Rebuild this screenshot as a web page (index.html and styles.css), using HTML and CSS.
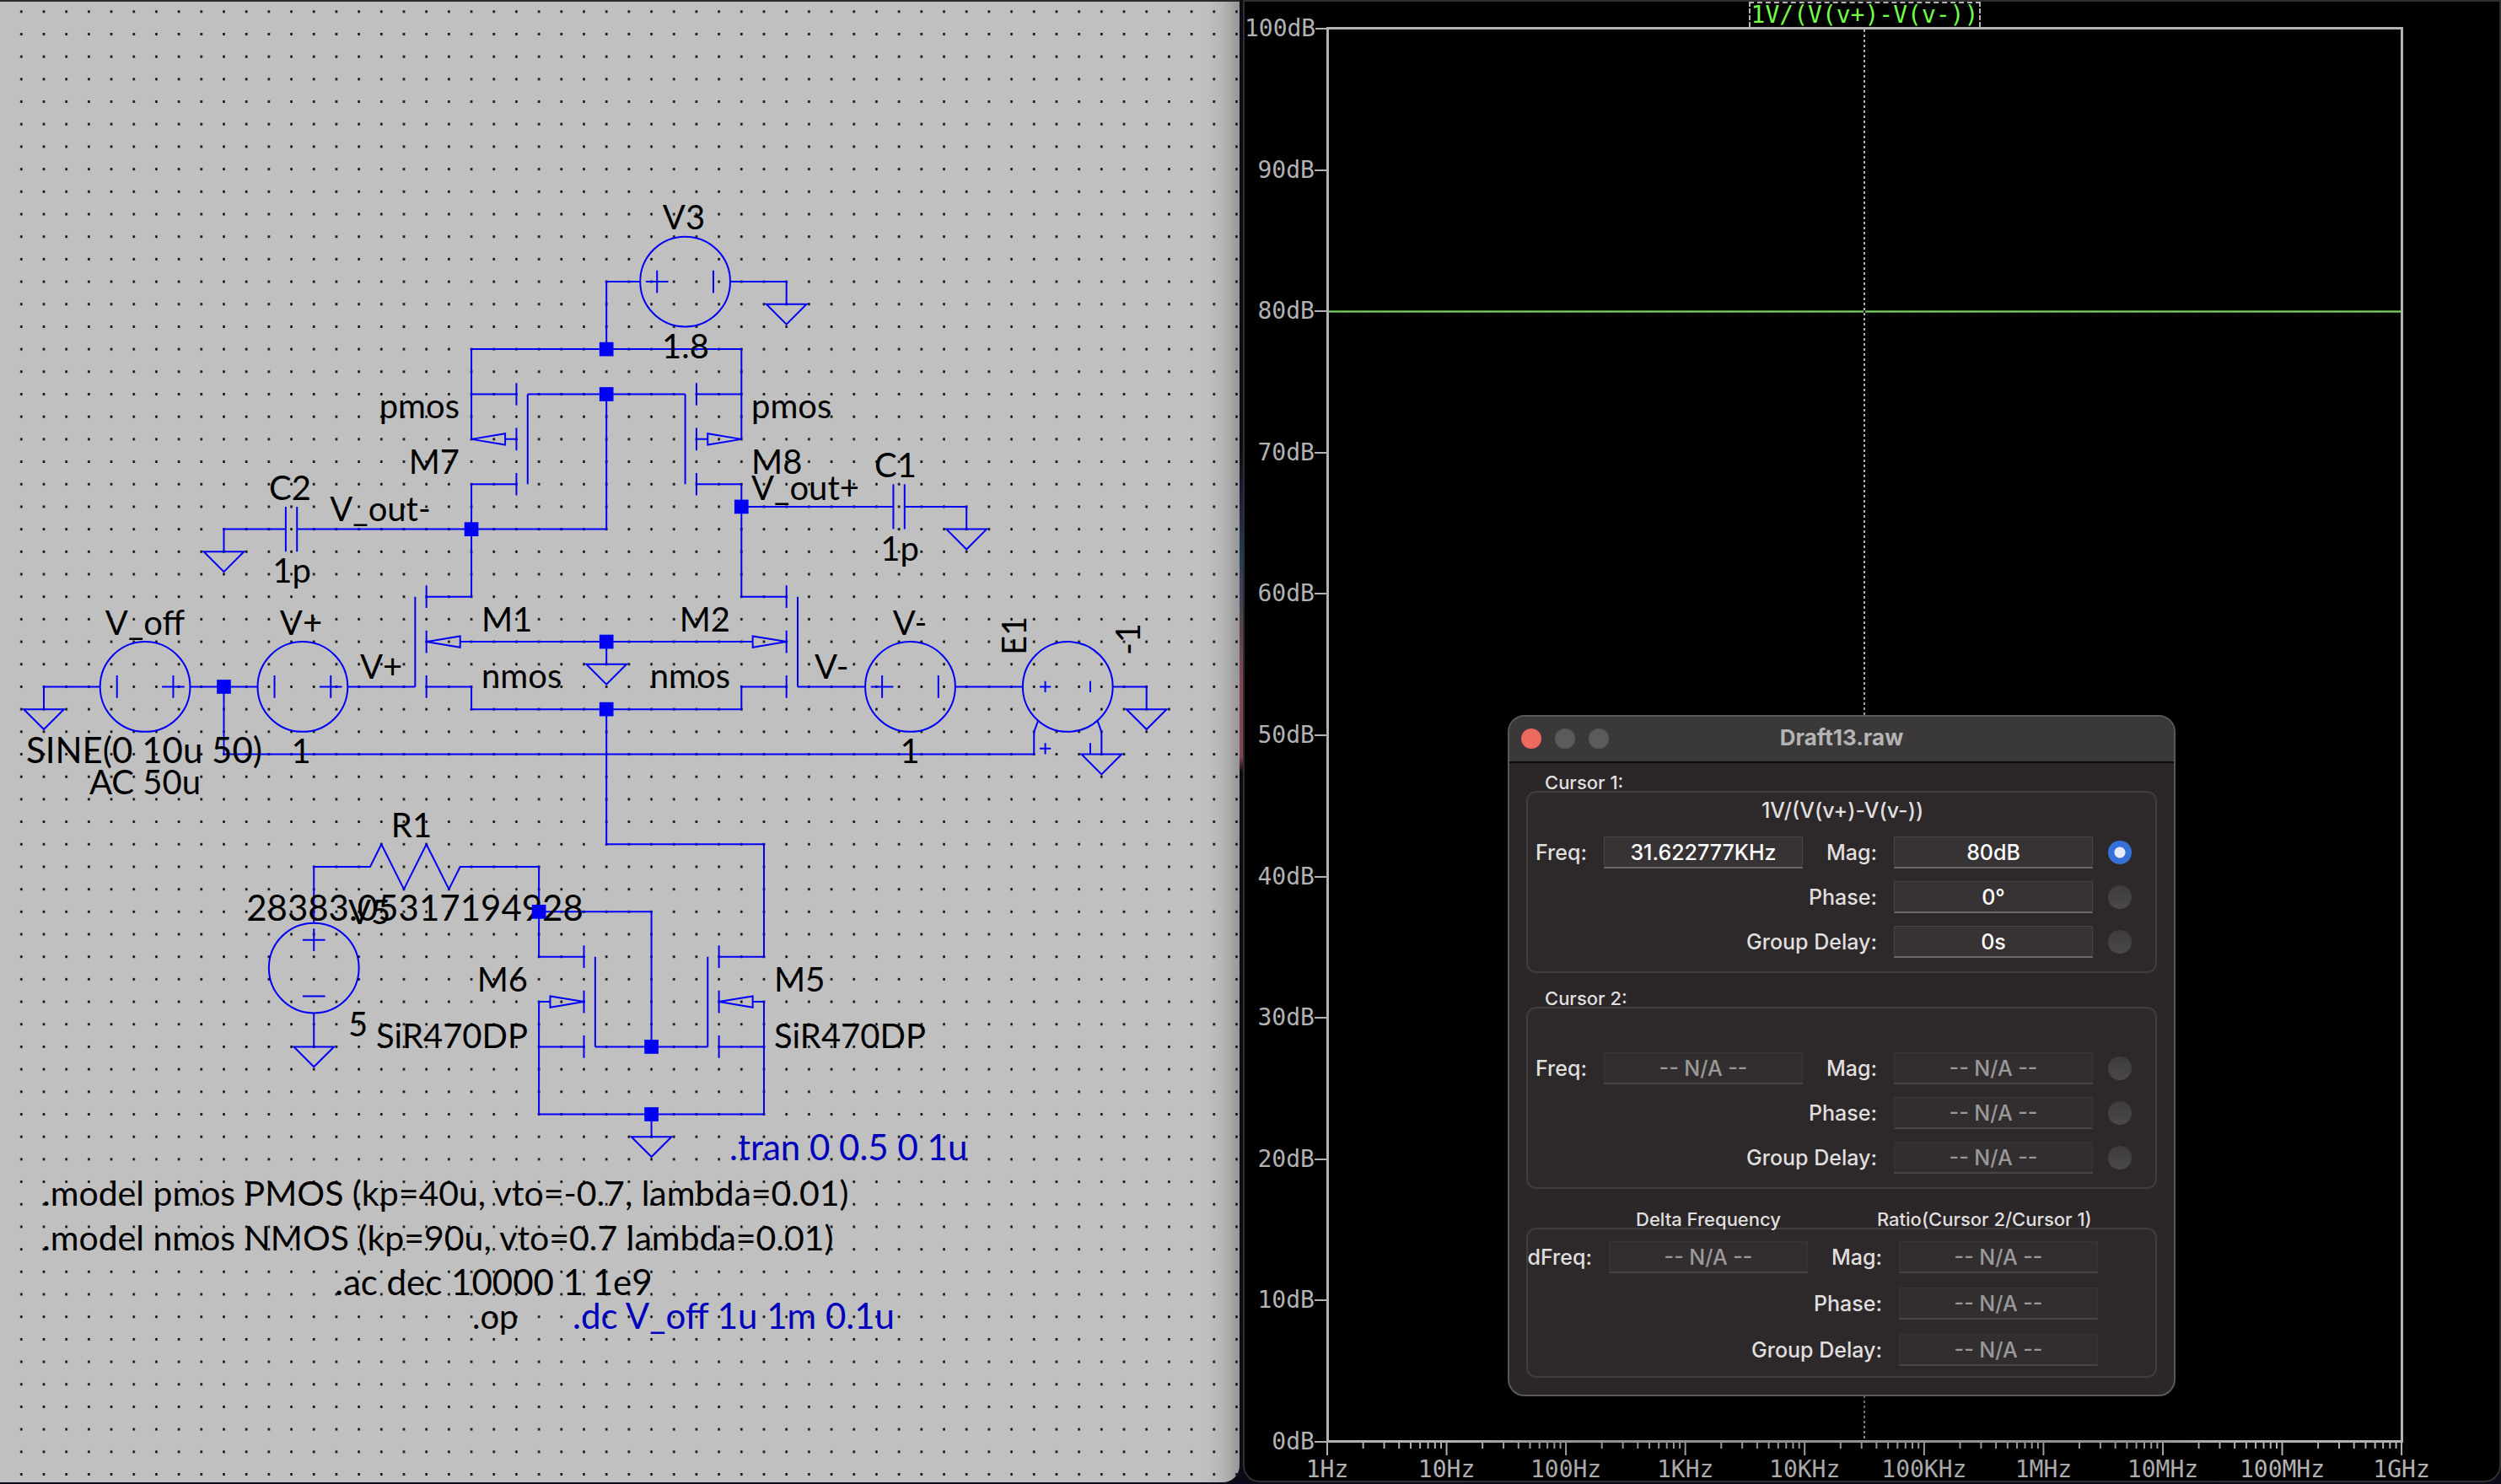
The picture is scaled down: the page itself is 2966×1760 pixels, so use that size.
FILE: index.html
```html
<!DOCTYPE html>
<html lang="en">
<head>
<meta charset="utf-8">
<title>Draft13</title>
<link rel="stylesheet" href="styles.css">
</head>
<body>
<main class="desktop">
  <section class="schematic" aria-label="Schematic">
    <svg class="sheet" xmlns="http://www.w3.org/2000/svg">
      <defs>
        <pattern id="dots" width="16" height="16" patternUnits="userSpaceOnUse" x="-8" y="-8">
          <rect x="7.3" y="7.1" width="1.4" height="1.8"/>
        </pattern>
        <path id="gnd" d="M-14.3 0H14.3L0 14.3Z"/>
        <rect id="node" x="-5" y="-5" width="10" height="10"/>
        <g id="source-right"><circle r="32"/><path d="M20 -8V8M12 0H28M-20 -8V8"/></g>
        <g id="source-left"><circle r="32"/><path d="M-20 -8V8M-28 0H-12M20 -8V8"/></g>
        <path id="fet" d="M0 0V64M8 -8V8M8 24V40M8 56V72M8 0H24M8 64H24"/>
      </defs>
      <g transform="translate(25.3 13.8) scale(1.668)">
        <rect x="-8" y="-8" width="100%" height="100%" fill="url(#dots)"/>
        <g class="wires">
          <!-- supply and current mirror load -->
          <path d="M416 240V192H440M504 192H544V208M320 304V240H512V304M416 272V368H196M360 272H472"/>
          <path d="M320 272H336M320 336H336M512 272H496M512 336H496M320 336V416H304M512 336V416H528"/>
          <path d="M188 368H144V384M512 352H620M628 352H672V368"/>
          <path d="M188 352V384M196 352V384M620 336V368M628 336V368"/>
          <!-- differential pair -->
          <path d="M16 496V480H56M120 480H168M232 480H280M304 480H320V496H512V480H528M416 448V464M312 448H520"/>
          <path d="M552 480H600M664 480H712M776 480H800V496"/>
          <path d="M144 480V528H720V512L723 504M765 504L768 512V528"/>
          <!-- tail and bias -->
          <path d="M416 496V592H528V672H512M208 648V608H248L256 592L272 624L288 592L304 624L312 608H368V672H384M368 640H448V736M408 736H488M208 712V736"/>
          <path d="M376 704H368V784H528V704H520M368 736H384M528 736H512M448 784V800"/>
          <!-- bodies -->
          <path d="M320 304L344 300V308ZM344 304H352M512 304L488 300V308ZM488 304H480M288 448L312 444V452ZM544 448L520 444V452ZM400 704L376 700V708ZM496 704L520 700V708Z"/>
          <use href="#fet" transform="translate(360 272) scale(-1 1)"/>
          <use href="#fet" x="472" y="272"/>
          <use href="#fet" x="280" y="416"/>
          <use href="#fet" transform="translate(552 416) scale(-1 1)"/>
          <use href="#fet" transform="translate(408 672) scale(-1 1)"/>
          <use href="#fet" x="488" y="672"/>
          <use href="#source-left" x="472" y="192"/>
          <use href="#source-right" x="88" y="480"/>
          <use href="#source-right" x="200" y="480"/>
          <use href="#source-left" x="632" y="480"/>
          <circle cx="744" cy="480" r="32"/>
          <path d="M728 476V484M724 480H732M760 476V484M728 520V528M724 524H732M760 520V528"/>
          <circle cx="208" cy="680" r="32"/>
          <path d="M208 652V668M200 660H216M200 700H216"/>
          <use href="#gnd" x="544" y="208"/><use href="#gnd" x="144" y="384"/>
          <use href="#gnd" x="672" y="368"/><use href="#gnd" x="16" y="496"/>
          <use href="#gnd" x="416" y="464"/><use href="#gnd" x="800" y="496"/>
          <use href="#gnd" x="768" y="528"/><use href="#gnd" x="208" y="736"/>
          <use href="#gnd" x="448" y="800"/>
        </g>
      </g>
      <g class="labels" transform="translate(0 1)">
        <text x="811" y="271" class="mid">V3</text>
        <text x="813" y="424" class="mid">1.8</text>
        <text x="545" y="495" class="end">pmos</text>
        <text x="545" y="561" class="end">M7</text>
        <text x="891" y="495">pmos</text>
        <text x="891" y="561">M8</text>
        <text x="891" y="592">V_out+</text>
        <text x="1062" y="565" class="mid">C1</text>
        <text x="1067" y="664" class="mid">1p</text>
        <text x="344" y="592" class="mid">C2</text>
        <text x="451" y="617" class="mid">V_out-</text>
        <text x="346" y="690" class="mid">1p</text>
        <text x="172" y="752" class="mid">V_off</text>
        <text x="357" y="752" class="mid">V+</text>
        <text x="427" y="804">V+</text>
        <text x="571" y="748">M1</text>
        <text x="571" y="815">nmos</text>
        <text x="866" y="748" class="end">M2</text>
        <text x="866" y="815" class="end">nmos</text>
        <text x="966" y="804">V-</text>
        <text x="1079" y="752" class="mid">V-</text>
        <text x="1079" y="904" class="mid">1</text>
        <text transform="translate(1217 776) rotate(-90)">E1</text>
        <text transform="translate(1352 776) rotate(-90)">-1</text>
        <text x="171" y="904" class="mid value">SINE(0 10u 50)</text>
        <text x="172" y="941" class="mid">AC 50u</text>
        <text x="357" y="904" class="mid">1</text>
        <text x="488" y="992" class="mid">R1</text>
        <text x="492" y="1091" class="mid value">28383.05317194928</text>
        <text x="413" y="1095">V5</text>
        <text x="413" y="1228">5</text>
        <text x="626" y="1175" class="end">M6</text>
        <text x="626" y="1242" class="end">SiR470DP</text>
        <text x="918" y="1175">M5</text>
        <text x="918" y="1242">SiR470DP</text>
        <text x="50" y="1429" class="model">.model pmos PMOS (kp=40u, vto=-0.7, lambda=0.01)</text>
        <text x="50" y="1482" class="model">.model nmos NMOS (kp=90u, vto=0.7 lambda=0.01)</text>
        <text x="397" y="1535" class="value">.ac dec 10000 1 1e9</text>
        <text x="560" y="1575">.op</text>
        <text x="865" y="1375" class="value comment">.tran 0 0.5 0 1u</text>
        <text x="679" y="1575" class="value comment">.dc V_off 1u 1m 0.1u</text>
      </g>
      <g class="nodes" transform="translate(25.3 13.8) scale(1.668)">
        <use href="#node" x="416" y="240"/><use href="#node" x="416" y="272"/>
        <use href="#node" x="320" y="368"/><use href="#node" x="512" y="352"/>
        <use href="#node" x="416" y="448"/><use href="#node" x="416" y="496"/>
        <use href="#node" x="144" y="480"/><use href="#node" x="368" y="640"/>
        <use href="#node" x="448" y="736"/><use href="#node" x="448" y="784"/>
      </g>
    </svg>
  </section>

  <section class="waveform" aria-label="Waveform">
    <div class="trace-name">1V/(V(v+)-V(v-))</div>
    <ul class="mag-axis">
      <li>100dB</li><li>90dB</li><li>80dB</li><li>70dB</li><li>60dB</li><li>50dB</li>
      <li>40dB</li><li>30dB</li><li>20dB</li><li>10dB</li><li>0dB</li>
    </ul>
    <div class="plot">
      <div class="trace"></div>
      <div class="cursor"></div>
    </div>
    <svg class="freq-axis" xmlns="http://www.w3.org/2000/svg">
      <defs>
        <symbol id="decade" overflow="visible">
          <path d="M0 0V15"/>
          <line x1="30.1%" x2="30.1%" y2="7"/><line x1="47.7%" x2="47.7%" y2="7"/>
          <line x1="60.2%" x2="60.2%" y2="7"/><line x1="69.9%" x2="69.9%" y2="7"/>
          <line x1="77.8%" x2="77.8%" y2="7"/><line x1="84.5%" x2="84.5%" y2="7"/>
          <line x1="90.3%" x2="90.3%" y2="7"/><line x1="95.4%" x2="95.4%" y2="7"/>
        </symbol>
      </defs>
      <g class="ticks">
        <use href="#decade" x="0%" width="11.11%" height="15"/>
        <use href="#decade" x="11.11%" width="11.11%" height="15"/>
        <use href="#decade" x="22.22%" width="11.11%" height="15"/>
        <use href="#decade" x="33.33%" width="11.11%" height="15"/>
        <use href="#decade" x="44.44%" width="11.11%" height="15"/>
        <use href="#decade" x="55.56%" width="11.11%" height="15"/>
        <use href="#decade" x="66.67%" width="11.11%" height="15"/>
        <use href="#decade" x="77.78%" width="11.11%" height="15"/>
        <use href="#decade" x="88.89%" width="11.11%" height="15"/>
        <line x1="100%" x2="100%" y2="15"/>
      </g>
      <text x="0%" y="41">1Hz</text>
      <text x="11.11%" y="41">10Hz</text>
      <text x="22.22%" y="41">100Hz</text>
      <text x="33.33%" y="41">1KHz</text>
      <text x="44.44%" y="41">10KHz</text>
      <text x="55.56%" y="41">100KHz</text>
      <text x="66.67%" y="41">1MHz</text>
      <text x="77.78%" y="41">10MHz</text>
      <text x="88.89%" y="41">100MHz</text>
      <text x="100%" y="41">1GHz</text>
    </svg>
  </section>

  <form class="dialog" aria-label="Draft13.raw">
    <header class="titlebar">
      <button type="button" class="light close" aria-label="Close"></button>
      <button type="button" class="light" aria-label="Minimize"></button>
      <button type="button" class="light" aria-label="Zoom"></button>
      <h1>Draft13.raw</h1>
    </header>
    <div class="content">
      <section class="group">
        <h2>Cursor 1:</h2>
        <div class="box">
          <p class="formula">1V/(V(v+)-V(v-))</p>
          <label for="f1">Freq:</label><input type="text" id="f1" value="31.622777KHz" readonly>
          <label for="m1">Mag:</label><input type="text" id="m1" value="80dB" readonly>
          <input type="radio" name="slope" aria-label="Cursor 1 magnitude" checked>
          <label for="p1" class="wide">Phase:</label><input type="text" id="p1" value="0°" readonly>
          <input type="radio" name="slope" aria-label="Cursor 1 phase">
          <label for="g1" class="wide">Group Delay:</label><input type="text" id="g1" value="0s" readonly>
          <input type="radio" name="slope" aria-label="Cursor 1 group delay">
        </div>
      </section>
      <section class="group">
        <h2>Cursor 2:</h2>
        <div class="box">
          <p class="formula"></p>
          <label for="f2">Freq:</label><input type="text" id="f2" value="-- N/A --" disabled>
          <label for="m2">Mag:</label><input type="text" id="m2" value="-- N/A --" disabled>
          <input type="radio" name="slope" aria-label="Cursor 2 magnitude">
          <label for="p2" class="wide">Phase:</label><input type="text" id="p2" value="-- N/A --" disabled>
          <input type="radio" name="slope" aria-label="Cursor 2 phase">
          <label for="g2" class="wide">Group Delay:</label><input type="text" id="g2" value="-- N/A --" disabled>
          <input type="radio" name="slope" aria-label="Cursor 2 group delay">
        </div>
      </section>
      <section class="group">
        <div class="captions"><h2>Delta Frequency</h2><h2>Ratio(Cursor 2/Cursor 1)</h2></div>
        <div class="box delta">
          <label for="df">dFreq:</label><input type="text" id="df" value="-- N/A --" disabled>
          <label for="m3">Mag:</label><input type="text" id="m3" value="-- N/A --" disabled>
          <label for="p3" class="wide">Phase:</label><input type="text" id="p3" value="-- N/A --" disabled>
          <label for="g3" class="wide">Group Delay:</label><input type="text" id="g3" value="-- N/A --" disabled>
        </div>
      </section>
    </div>
  </form>
</main>
</body>
</html>
```

FILE: styles.css
```css
* { box-sizing: border-box; }

body {
  margin: 0;
  background: #0c0a18;
  font-family: Inter, "Liberation Sans", sans-serif;
}

.desktop {
  position: relative;
  display: flex;
  gap: 4px;
  height: 100vh;
  padding-bottom: 2px;
  background: linear-gradient(#0c0a18 30%, #2c3f5c 38%, #84474c 46%, #84474c 51%, #0c0a18 52%);
}

/* schematic editor */
.schematic {
  position: relative;
  flex: 0 0 49.56%;
  overflow: hidden;
  background: #c0c0c0;
  border-top: 2px solid #2a2a2c;
  border-radius: 0 0 20px 0;
}
.schematic::after {
  content: "";
  position: absolute;
  inset: 0 0 0 auto;
  width: 40px;
  background: linear-gradient(to right, rgba(0, 0, 0, 0), rgba(0, 0, 0, .06) 50%, rgba(0, 0, 0, .22));
}
.sheet {
  display: block;
  width: 100%;
  height: 100%;
  margin-top: -2px;
}
.wires { fill: none; stroke: #0000f4; stroke-width: 1.2; }
.nodes { fill: #0000f4; }
.labels { font-family: Lato, sans-serif; font-size: 40px; }
.model { font-size: 41px; }
.value { font-size: 42px; }
.mid { text-anchor: middle; }
.end { text-anchor: end; }
.comment { fill: #0000bc; }

/* waveform viewer */
.waveform {
  flex: 1;
  display: grid;
  grid-template-columns: 97px 1fr 114px;
  grid-template-rows: 30px 1fr 45px;
  background: #000;
  border: 2px solid #2f2f30;
  border-radius: 0 0 20px 20px;
  color: #b2b2b2;
  font-family: "DejaVu Sans Mono", monospace;
  font-size: 28px;
}
.trace-name {
  grid-column: 2;
  justify-self: center;
  padding: 0 1px;
  border: 2px dashed #b2b2b2;
  border-bottom: 0;
  line-height: 28px;
  color: #73fb4c;
}
.mag-axis {
  grid-area: 2 / 1;
  display: flex;
  flex-direction: column;
  justify-content: space-between;
  margin: -14px 0 -15px;
  padding: 0;
  list-style: none;
}
.mag-axis li {
  display: flex;
  align-items: center;
  justify-content: flex-end;
  line-height: 32px;
}
.mag-axis li::after {
  content: "";
  width: 14px;
  height: 2px;
  background: #b2b2b2;
}
.plot {
  grid-area: 2 / 2;
  position: relative;
  border: 3px solid #b2b2b2;
}
.trace {
  position: absolute;
  top: 20%;
  left: 0;
  right: 0;
  height: 3px;
  margin-top: -2px;
  border: solid #4d8a39;
  border-width: 1px 0;
  background: repeating-linear-gradient(to right, #a8a8a8 0 3px, #55f52e 3px 6px);
}
.cursor {
  position: absolute;
  top: 0;
  bottom: 0;
  left: 50%;
  width: 2px;
  margin-left: -1px;
  background: repeating-linear-gradient(#b2b2b2 0 3px, #000 3px 6px);
}
.freq-axis {
  grid-area: 3 / 2;
  width: calc(100% - 3px);
  height: 100%;
  margin-left: 1px;
  overflow: visible;
  fill: #b2b2b2;
}
.freq-axis text { text-anchor: middle; }
.ticks { stroke: #b2b2b2; stroke-width: 2; }

/* cursor readout window */
.dialog {
  position: absolute;
  top: 848px;
  left: 1788px;
  width: 792px;
  overflow: hidden;
  background: #2b2728;
  border: 2px solid #5a5859;
  border-radius: 20px;
  box-shadow: 0 30px 70px 10px rgba(0, 0, 0, .5);
  color: #e0dfdf;
  font-size: 25px;
  font-weight: 500;
}
.titlebar {
  position: relative;
  display: flex;
  align-items: center;
  gap: 16px;
  height: 55px;
  padding: 0 14px 2px;
  background: #3a3839;
  border-bottom: 2px solid #0c0b0b;
}
.titlebar h1 {
  position: absolute;
  inset: 0;
  margin: 0;
  text-align: center;
  font-size: 26px;
  font-weight: 700;
  line-height: 50px;
  color: #b5b4b4;
  pointer-events: none;
}
.light {
  width: 24px;
  height: 24px;
  padding: 0;
  border: 0;
  border-radius: 50%;
  background: #5c5a5b;
}
.close { background: #ed6a5e; }

.content {
  display: flex;
  flex-direction: column;
  padding: 9px 20px 20px;
}
.group { margin-bottom: 16px; }
.group:last-child { margin: 6px 0 0; }
.group h2 {
  margin: 0;
  padding: 4px 0 0 22px;
  font-size: 22px;
  font-weight: 500;
  line-height: 20px;
}
.captions { display: flex; }
.captions h2 { margin-left: 108px; }
.captions h2 + h2 { margin-left: 92px; }
.box {
  display: grid;
  grid-template-columns: 70px 236px 68px 236px 28px;
  grid-template-rows: 37px;
  grid-auto-rows: 38px;
  align-items: center;
  gap: 15px 20px;
  padding-bottom: 16px;
  background: #2d292a;
  border: 2px solid #403d3e;
  border-radius: 12px;
}
.formula {
  grid-column: 1 / -1;
  align-self: start;
  margin: 0 -28px 0 0;
  text-align: center;
  line-height: 42px;
}
.delta {
  grid-template-columns: 76px 236px 68px 236px;
  grid-template-rows: none;
  row-gap: 17px;
  padding: 14px 0 12px;
}
label {
  justify-self: end;
  white-space: nowrap;
  line-height: 34px;
}
.wide { grid-column: 1 / 4; }
input[type="text"] {
  width: 236px;
  height: 38px;
  padding: 0;
  border: 1px solid #464344;
  border-bottom: 2px solid #6a6869;
  background: #373334;
  color: #fff;
  font: inherit;
  text-align: center;
}
input[type="text"]:disabled {
  border-color: #383435;
  border-bottom-color: #484546;
  background: #322e2f;
  color: #9a9899;
}
input[type="radio"] {
  appearance: none;
  width: 28px;
  height: 28px;
  margin: 0 0 0 -2px;
  border-radius: 50%;
  background: linear-gradient(#3e3b3c, #4b4849);
}
input[type="radio"]:checked {
  background: radial-gradient(circle, #e4ecfa 0 6px, #3571d8 7px);
}
```
